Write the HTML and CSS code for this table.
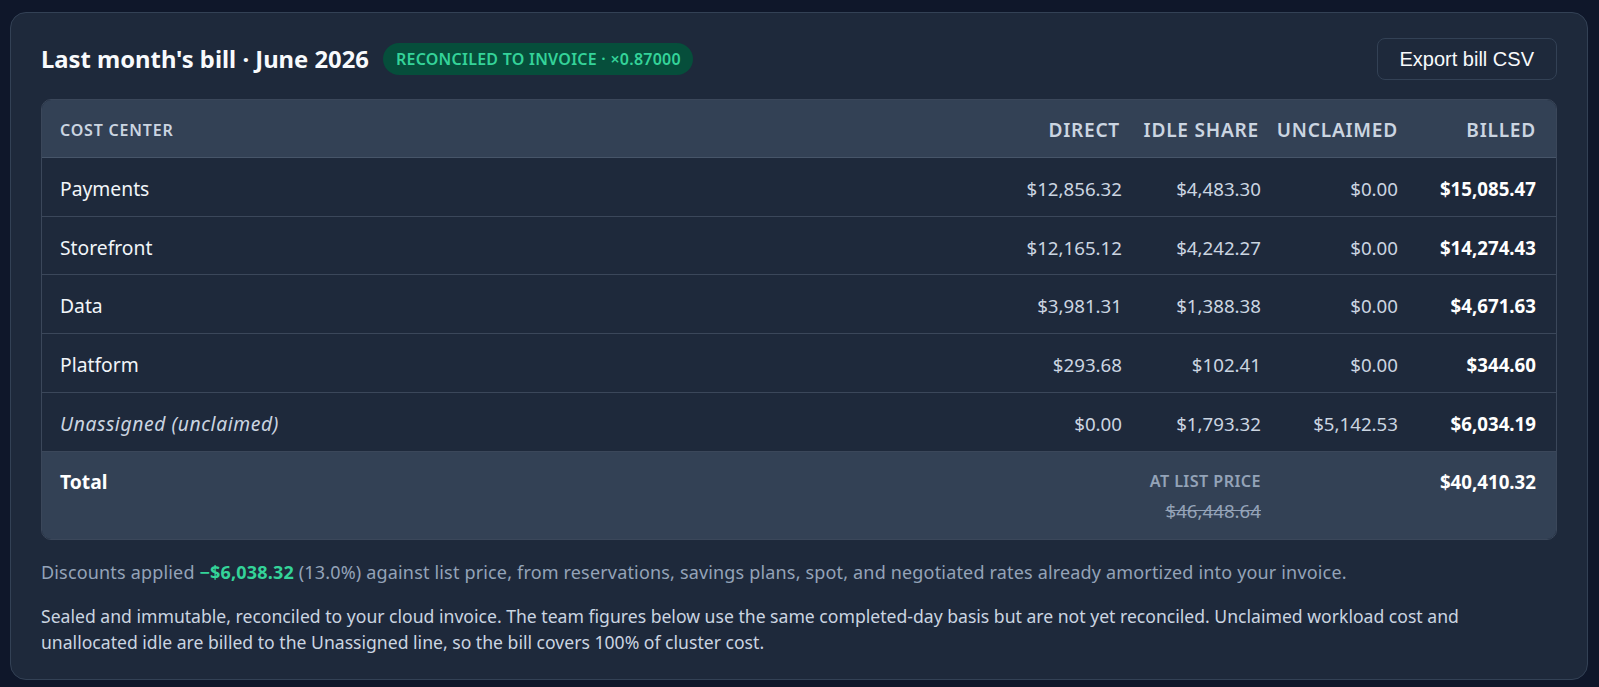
FILE: index.html
```html
<!DOCTYPE html>
<html lang="en">
<head>
<meta charset="utf-8">
<title>Last month's bill</title>
<link rel="stylesheet" href="styles.css">
</head>
<body>
<section class="card">
  <header class="card-head">
    <div class="title-group">
      <h2 class="title">Last month's bill · June 2026</h2>
      <span class="badge">RECONCILED TO INVOICE · ×0.87000</span>
    </div>
    <button class="btn" type="button">Export bill CSV</button>
  </header>

  <div class="table-wrap">
    <table class="bill">
      <colgroup>
        <col>
        <col class="c-direct">
        <col class="c-idle">
        <col class="c-unclaimed">
        <col class="c-billed">
      </colgroup>
      <thead>
        <tr>
          <th class="name">Cost center</th>
          <th class="num inset">Direct</th>
          <th class="num inset">Idle share</th>
          <th class="num tight">Unclaimed</th>
          <th class="num">Billed</th>
        </tr>
      </thead>
      <tbody>
        <tr>
          <td class="name">Payments</td>
          <td class="num">$12,856.32</td>
          <td class="num">$4,483.30</td>
          <td class="num">$0.00</td>
          <td class="num strong">$15,085.47</td>
        </tr>
        <tr>
          <td class="name">Storefront</td>
          <td class="num">$12,165.12</td>
          <td class="num">$4,242.27</td>
          <td class="num">$0.00</td>
          <td class="num strong">$14,274.43</td>
        </tr>
        <tr>
          <td class="name">Data</td>
          <td class="num">$3,981.31</td>
          <td class="num">$1,388.38</td>
          <td class="num">$0.00</td>
          <td class="num strong">$4,671.63</td>
        </tr>
        <tr>
          <td class="name">Platform</td>
          <td class="num">$293.68</td>
          <td class="num">$102.41</td>
          <td class="num">$0.00</td>
          <td class="num strong">$344.60</td>
        </tr>
        <tr>
          <td class="name unassigned">Unassigned (unclaimed)</td>
          <td class="num">$0.00</td>
          <td class="num">$1,793.32</td>
          <td class="num">$5,142.53</td>
          <td class="num strong">$6,034.19</td>
        </tr>
      </tbody>
      <tfoot>
        <tr>
          <td class="name total-label">Total</td>
          <td class="num"></td>
          <td class="num list">
            <span class="list-label">AT LIST PRICE</span>
            <s class="list-value">$46,448.64</s>
          </td>
          <td class="num"></td>
          <td class="num strong">$40,410.32</td>
        </tr>
      </tfoot>
    </table>
  </div>

  <p class="discount">Discounts applied <strong class="saving">−$6,038.32</strong> (13.0%) against list price, from reservations, savings plans, spot, and negotiated rates already amortized into your invoice.</p>
  <p class="note">Sealed and immutable, reconciled to your cloud invoice. The team figures below use the same completed-day basis but are not yet reconciled. Unclaimed workload cost and unallocated idle are billed to the Unassigned line, so the bill covers 100% of cluster cost.</p>
</section>
</body>
</html>
```
FILE: styles.css
```css
* { box-sizing: border-box; }

html, body {
  background: #0f172a;
}

body {
  margin: 0;
  padding: 12px 11px 8px 10px;
  font-family: "Noto Sans", "Open Sans", sans-serif;
  color: #e2e8f0;
}

.card {
  background: #1e293b;
  border: 1px solid #334155;
  border-radius: 16px;
  padding: 25px 30px 23px;
}

.card-head {
  display: flex;
  align-items: center;
  justify-content: space-between;
  height: 42px;
  margin-bottom: 19px;
}

.title-group {
  display: flex;
  align-items: center;
  gap: 14px;
}

.title {
  margin: 0;
  font-size: 23.8px;
  font-weight: 700;
  line-height: 32px;
  color: #f8fafc;
}

.badge {
  display: inline-block;
  padding: 6px 12px 5px 13px;
  border-radius: 999px;
  background: #064e3b;
  color: #34d399;
  font-size: 16px;
  font-weight: 600;
  line-height: 21px;
  letter-spacing: 0.25px;
  white-space: nowrap;
}

.btn {
  height: 42px;
  padding: 0 22px;
  background: #1e293b;
  color: #f8fafc;
  border: 1px solid #334155;
  border-radius: 8px;
  font-family: "Liberation Sans", Arial, sans-serif;
  font-size: 20px;
  cursor: pointer;
}

.table-wrap {
  border: 1px solid #3b475a;
  border-radius: 10px;
  overflow: hidden;
  margin-bottom: 19px;
}

.bill {
  width: 100%;
  table-layout: fixed;
  border-collapse: separate;
  border-spacing: 0;
}

.c-direct { width: 116px; }
.c-idle { width: 139px; }
.c-unclaimed { width: 137px; }
.c-billed { width: 148px; }

.bill th,
.bill td {
  padding: 18px 10px 14px;
  white-space: nowrap;
  vertical-align: top;
}

.bill th:first-child,
.bill td:first-child { padding-left: 18px; }

.bill th:last-child,
.bill td:last-child { padding-right: 20px; }

.bill thead th {
  background: #334155;
  color: #cbd5e1;
  font-weight: 600;
  line-height: 25px;
  text-transform: uppercase;
  border-bottom: 1px solid #475569;
}

.bill th.name {
  text-align: left;
  font-size: 16px;
  letter-spacing: 0.05em;
}

.bill th.num {
  text-align: right;
  font-size: 19.1px;
  letter-spacing: 0.04em;
}

.bill th.inset {
  padding-right: 12px;
}

.bill th.tight {
  padding-left: 2px;
  padding-right: 10px;
}

.bill tbody td {
  line-height: 25.7px;
  border-bottom: 1px solid #3b475a;
}

.bill td.name {
  text-align: left;
  font-size: 19.3px;
  color: #f1f5f9;
}

.bill td.num {
  text-align: right;
  font-size: 18.7px;
  color: #cbd5e1;
}

.bill td.strong {
  font-weight: 700;
  color: #ffffff;
}

.bill td.unassigned {
  font-style: italic;
  color: #cbd5e1;
  letter-spacing: 0.6px;
}

.bill tfoot td {
  background: #334155;
  line-height: 25.7px;
  padding-top: 17px;
  padding-bottom: 15px;
}

.bill td.total-label {
  font-weight: 700;
  color: #ffffff;
}

.list-label {
  display: block;
  margin-bottom: 4px;
  font-size: 16.2px;
  font-weight: 600;
  letter-spacing: 0.4px;
  color: #94a3b8;
}

.list-value {
  display: block;
  color: #94a3b8;
}

.discount {
  margin: 0 0 18px;
  font-size: 18px;
  line-height: 26px;
  letter-spacing: 0.17px;
  color: #94a3b8;
}

.saving {
  font-weight: 700;
  color: #34d399;
}

.note {
  margin: 0;
  font-size: 17.6px;
  line-height: 26.5px;
  color: #cbd5e1;
}
```
